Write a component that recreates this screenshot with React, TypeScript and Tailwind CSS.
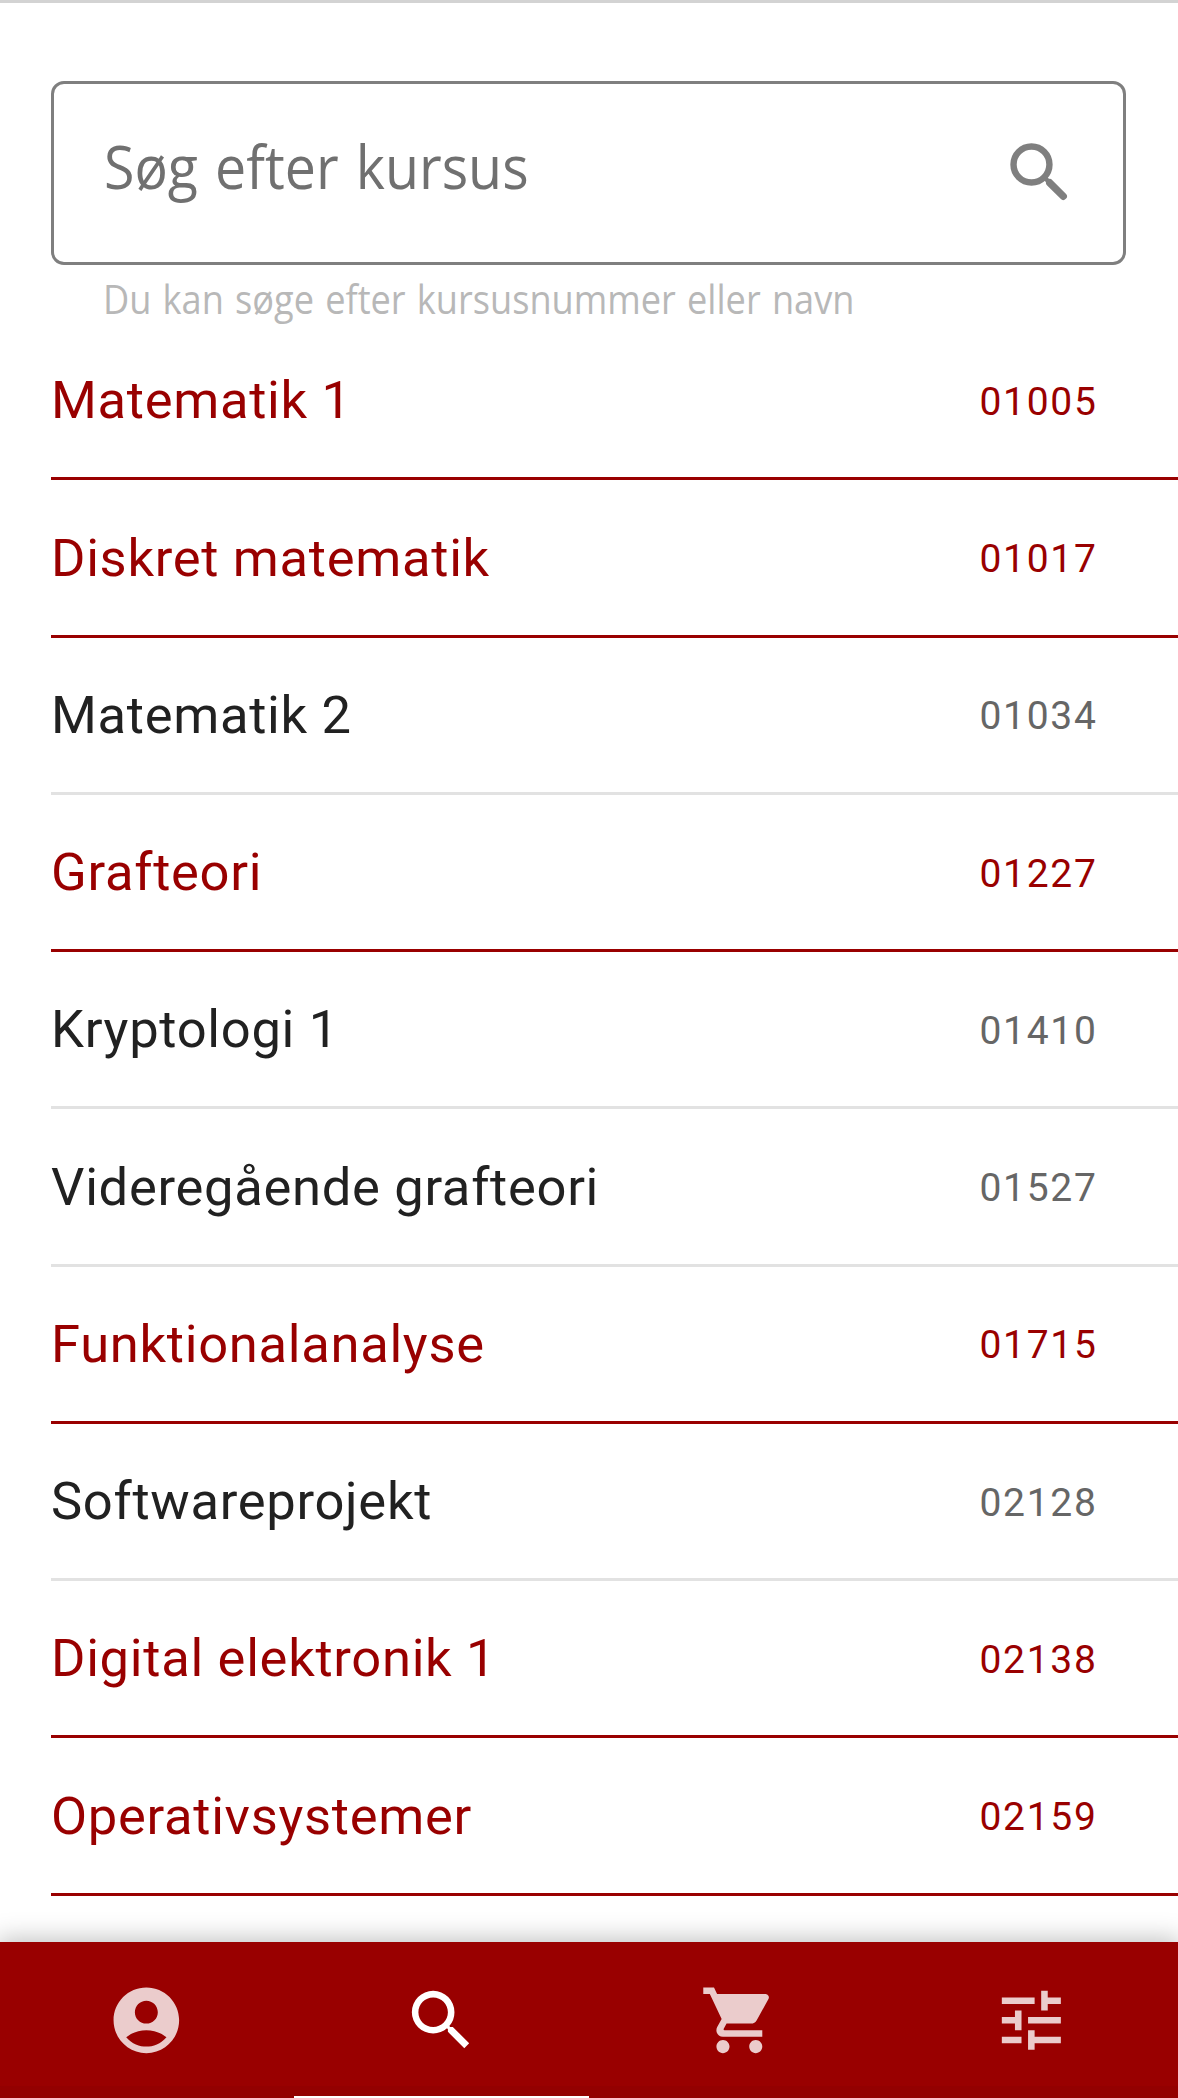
import { MdSearch, MdAccountCircle, MdShoppingCart, MdTune } from 'react-icons/md';

const courses = [
  { name: 'Matematik 1', id: '01005', selected: true },
  { name: 'Diskret matematik', id: '01017', selected: true },
  { name: 'Matematik 2', id: '01034', selected: false },
  { name: 'Grafteori', id: '01227', selected: true },
  { name: 'Kryptologi 1', id: '01410', selected: false },
  { name: 'Videregående grafteori', id: '01527', selected: false },
  { name: 'Funktionalanalyse', id: '01715', selected: true },
  { name: 'Softwareprojekt', id: '02128', selected: false },
  { name: 'Digital elektronik 1', id: '02138', selected: true },
  { name: 'Operativsystemer', id: '02159', selected: true },
];

function RoundedSearchIcon() {
  return (
    <svg viewBox="0 0 24 24" className="size-[77px] shrink-0" fill="none" stroke="#7f7f7f" strokeWidth="2">
      <circle cx="9.5" cy="9.5" r="5.6" />
      <path d="M13.4 13.4 15 15" strokeWidth="1.4" />
      <path d="M15.2 15.2 19.4 19.4" strokeWidth="2.3" strokeLinecap="round" />
    </svg>
  );
}

export default function App() {
  return (
    <div className="flex h-[2098px] w-[1178px] flex-col overflow-hidden border-t-[3px] border-[#d3d3d3] bg-white font-['Roboto',sans-serif]">
      <div className="ml-[51px] mt-[78px] flex h-[184px] w-[1075px] shrink-0 items-start justify-between rounded-[13px] border-[3px] border-[#7f7f7f] pl-[50px] pr-[45px]">
        <span className="mt-[40px] origin-left scale-x-[0.91] whitespace-nowrap font-['Open_Sans',sans-serif] text-[61px] leading-[84px] text-[#707070] [word-spacing:3px]">Søg efter kursus</span>
        <div className="mt-[50px]"><RoundedSearchIcon /></div>
      </div>
      <div className="ml-[103px] mt-[8px] h-[52px] w-fit shrink-0 origin-left scale-x-[0.904] whitespace-nowrap font-['Open_Sans',sans-serif] text-[40px] leading-[52px] text-[#b8b8b8] [word-spacing:2px]">Du kan søge efter kursusnummer eller navn</div>
      <div className="ml-[51px] mt-[-2px] shrink-0">
        {courses.map((c) => (
          <div key={c.id} className={c.selected ? 'flex h-[157.25px] items-center justify-between border-b-[3px] border-[#990000] pr-[80.5px] text-[#990000]' : 'flex h-[157.25px] items-center justify-between border-b-[3px] border-[#e2e2e2] pr-[80.5px] text-[#212121]'}>
            <span className="pt-px text-[52.5px] tracking-[0.7px]">{c.name}</span>
            <span className={c.selected ? 'pt-[4px] text-[39px] tracking-[1.7px]' : 'pt-[4px] text-[39px] tracking-[1.7px] text-[#666]'}>{c.id}</span>
          </div>
        ))}
      </div>
      <nav className="mt-auto grid h-[156px] shrink-0 grid-cols-4 bg-[linear-gradient(#990000_92%,#930000_92%)] text-[#ebcccc] shadow-[0_0_24px_3px_rgba(0,0,0,0.25)]">
        <div className="flex items-center justify-center pr-[2px] pt-px"><MdAccountCircle className="size-[78.7px]" /></div>
        <div className="-ml-px flex items-center justify-center border-b-2 pt-[3px] text-white"><MdSearch className="size-[78.7px]" /></div>
        <div className="flex items-center justify-center pl-[6px] pt-px"><MdShoppingCart className="size-[78.7px]" /></div>
        <div className="flex items-center justify-center pl-px pt-px"><MdTune className="size-[78.7px]" /></div>
      </nav>
    </div>
  );
}
